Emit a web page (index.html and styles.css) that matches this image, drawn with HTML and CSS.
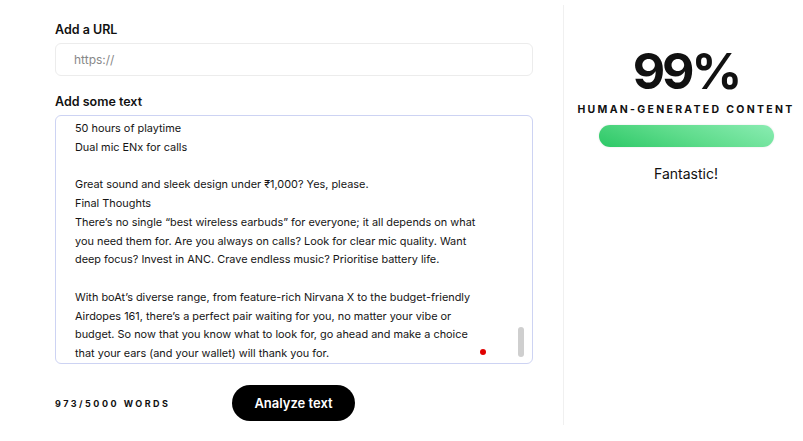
FILE: index.html
```html
<!DOCTYPE html>
<html>

<head>
  <title>Human Content Checker</title>
  <link rel="stylesheet" href="styles.css">
</head>

<body>
  <div class="page">
    <!-- Input column -->
    <div class="input-col">
      <label class="field-label">Add a URL</label>
      <div class="url-box">https://</div>

      <label class="field-label second">Add some text</label>
      <div class="text-box">
        <p>50 hours of playtime</p>
        <p>Dual mic ENx for calls</p>
        <p>&nbsp;</p>
        <p>Great sound and sleek design under ₹1,000? Yes, please.</p>
        <p>Final Thoughts</p>
        <p>There’s no single “best wireless earbuds” for everyone; it all depends on what</p>
        <p>you need them for. Are you always on calls? Look for clear mic quality. Want</p>
        <p>deep focus? Invest in ANC. Crave endless music? Prioritise battery life.</p>
        <p>&nbsp;</p>
        <p>With boAt’s diverse range, from feature-rich Nirvana X to the budget-friendly</p>
        <p>Airdopes 161, there’s a perfect pair waiting for you, no matter your vibe or</p>
        <p>budget. So now that you know what to look for, go ahead and make a choice</p>
        <p>that your ears (and your wallet) will thank you for.</p>
        <span class="scroll-thumb"></span>
        <span class="red-dot"></span>
      </div>

      <div class="footer">
        <span class="word-count">973/5000 WORDS</span>
        <button class="analyze-btn">Analyze text</button>
      </div>
    </div>

    <!-- Result column -->
    <div class="result-col">
      <div class="score">99%</div>
      <div class="score-label">HUMAN-GENERATED CONTENT</div>
      <div class="score-bar"></div>
      <div class="verdict">Fantastic!</div>
    </div>
  </div>
</body>

</html>
```

FILE: styles.css
```css
/* Common styles */
* {
  margin: 0;
  padding: 0;
  box-sizing: border-box;
}

body {
  font-family: Inter, "Noto Sans", sans-serif;
  background-color: #fff;
  color: #111;
}

.page {
  display: flex;
  width: 803px;
  height: 441px;
}

/* Left column */
.input-col {
  width: 533px;
  padding: 20px 0 0 55px;
}

.field-label {
  display: block;
  font-size: 12.5px;
  font-weight: 600;
  line-height: 20px;
  margin-bottom: 3px;
}

.field-label.second {
  margin-top: 16px;
}

.url-box {
  height: 33px;
  border: 1px solid #ececec;
  border-radius: 6px;
  padding-left: 18px;
  font-size: 12px;
  line-height: 31px;
  color: #888;
}

.text-box {
  position: relative;
  height: 249px;
  border: 1px solid #cdd3f3;
  border-radius: 6px;
  padding: 3px 19px;
  font-size: 10.9px;
  line-height: 18.75px;
  color: #151515;
  overflow: hidden;
}

.scroll-thumb {
  position: absolute;
  right: 8px;
  top: 211px;
  width: 6px;
  height: 30px;
  border-radius: 3px;
  background-color: #cfcfcf;
}

.red-dot {
  position: absolute;
  left: 424px;
  top: 233px;
  width: 6px;
  height: 6px;
  border-radius: 50%;
  background-color: #e00000;
}

.footer {
  display: flex;
  align-items: center;
  margin-top: 21px;
}

.word-count {
  width: 177px;
  font-size: 9px;
  font-weight: 700;
  letter-spacing: 2.5px;
}

.analyze-btn {
  width: 123px;
  height: 36px;
  border: none;
  border-radius: 18px;
  background-color: #000;
  color: #fff;
  font-family: inherit;
  font-size: 13px;
  font-weight: 600;
}

/* Right column */
.result-col {
  margin: 5px 0 16px 30px;
  flex: 1;
  border-left: 1px solid #f0f0f0;
  display: flex;
  flex-direction: column;
  align-items: center;
  padding: 36px 0 0 5px;
}

.score {
  font-size: 50px;
  font-weight: 700;
  line-height: 60px;
  letter-spacing: -3px;
}

.score-label {
  font-size: 10.5px;
  font-weight: 700;
  letter-spacing: 2.3px;
  margin-top: 2px;
}

.score-bar {
  width: 175px;
  height: 22px;
  margin-top: 9px;
  border-radius: 11px;
  background: linear-gradient(20deg, #2cc866 0%, #5fdc8c 50%, #8aecb2 100%);
  box-shadow: 0 0 2px rgba(0, 0, 0, 0.12);
}

.verdict {
  margin-top: 18px;
  font-size: 14px;
}
```
